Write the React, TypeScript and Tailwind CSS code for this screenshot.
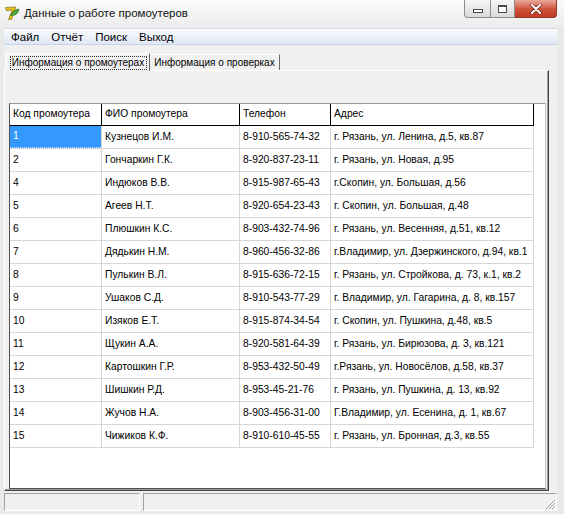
import React from "react";

const rows: string[][] = [
  ["1", "Кузнецов И.М.", "8-910-565-74-32", "г. Рязань, ул. Ленина, д.5, кв.87"],
  ["2", "Гончаркин Г.К.", "8-920-837-23-11", "г. Рязань, ул. Новая, д.95"],
  ["4", "Индюков В.В.", "8-915-987-65-43", "г.Скопин, ул. Большая, д.56"],
  ["5", "Агеев Н.Т.", "8-920-654-23-43", "г. Скопин, ул. Большая, д.48"],
  ["6", "Плюшкин К.С.", "8-903-432-74-96", "г. Рязань, ул. Весенняя, д.51, кв.12"],
  ["7", "Дядькин Н.М.", "8-960-456-32-86", "г.Владимир, ул. Дзержинского, д.94, кв.1"],
  ["8", "Пулькин В.Л.", "8-915-636-72-15", "г. Рязань, ул. Стройкова, д. 73, к.1, кв.2"],
  ["9", "Ушаков С.Д.", "8-910-543-77-29", "г. Владимир, ул. Гагарина, д. 8, кв.157"],
  ["10", "Изяков Е.Т.", "8-915-874-34-54", "г. Скопин, ул. Пушкина, д.48, кв.5"],
  ["11", "Щукин А.А.", "8-920-581-64-39", "г. Рязань, ул. Бирюзова, д. 3, кв.121"],
  ["12", "Картошкин Г.Р.", "8-953-432-50-49", "г.Рязань, ул. Новосёлов, д.58, кв.37"],
  ["13", "Шишкин Р.Д.", "8-953-45-21-76", "г. Рязань, ул. Пушкина, д. 13, кв.92"],
  ["14", "Жучов Н.А.", "8-903-456-31-00", "Г.Владимир, ул. Есенина, д. 1, кв.67"],
  ["15", "Чижиков К.Ф.", "8-910-610-45-55", "г. Рязань, ул. Бронная, д.3, кв.55"],
];

const headers = ["Код промоутера", "ФИО промоутера", "Телефон", "Адрес"];
const colW = ["w-[92px]", "w-[138px]", "w-[91px]", "w-[203px]"];

function AppIcon() {
  return (
    <svg width="16" height="16" viewBox="0 0 16 16">
      <path d="M1.5 2.5 L12 2 L7.5 14.5 L4.5 14.5 L8.3 5.2 L2.2 5.4 Z" fill="#e6c21e" stroke="#7a5a00" strokeWidth="0.6" />
      <path d="M6.5 10.5 C8 6.5 11.5 4.5 15 4 C14.5 8 11.5 11 6.5 10.5 Z" fill="#2f9a2a" stroke="#1d5e18" strokeWidth="0.5" />
      <path d="M8 10 L13 6" stroke="#a8e070" strokeWidth="0.7" />
    </svg>
  );
}

export default function App() {
  return (
    <div className="w-[564px] h-[514px] overflow-hidden flex flex-col bg-[#e9e9e9] text-black font-['Liberation_Sans',Arial,sans-serif] select-none">
      {/* Title bar */}
      <div className="h-[28px] flex items-start pl-[4px] pr-[7px] bg-gradient-to-b from-[#fbfbfb] to-[#ececec]">
        <div className="mt-[5px]">
          <AppIcon />
        </div>
        <div className="mt-[6px] ml-[4px] text-[11.5px] leading-[14px] text-[#111]">Данные о работе промоутеров</div>
        <div className="flex-1" />
        <div className="flex h-[18px]">
          <div className="w-[27px] h-full flex items-end justify-center pb-[4px] rounded-bl-[4px] border border-t-0 border-[#8c8c8c] bg-gradient-to-b from-[#f6f6f6] to-[#d9d9d9]">
            <div className="w-[10px] h-[4px] border border-[#4a4a4a] bg-white" />
          </div>
          <div className="w-[24px] h-full flex items-center justify-center border-b border-r border-[#8c8c8c] bg-gradient-to-b from-[#f6f6f6] to-[#d9d9d9]">
            <div className="w-[9px] h-[8px] border border-[#4a4a4a] border-t-2 bg-white" />
          </div>
          <div className="w-[42px] h-full flex items-center justify-center rounded-br-[4px] border border-t-0 border-l-0 border-[#8a3a2e] bg-gradient-to-b from-[#e9a99c] via-[#d0553f] to-[#c13a22]">
            <svg width="12" height="10" viewBox="0 0 12 10">
              <path d="M2 1 L10 9 M10 1 L2 9" stroke="#5a1a10" strokeWidth="3.2" strokeLinecap="round" />
              <path d="M2 1 L10 9 M10 1 L2 9" stroke="#ffffff" strokeWidth="2" strokeLinecap="round" />
            </svg>
          </div>
        </div>
      </div>

      {/* Client area */}
      <div className="flex-1 flex flex-col ml-[4px] mr-[7px] mb-[3px] bg-[#f0f0f0]">
        {/* Menu bar */}
        <div className="h-[17px] flex items-center pl-[1px] text-[11.5px] leading-[14px] bg-gradient-to-b from-[#fbfcfe] to-[#dfe7f4] border-t border-[#d3dcea] border-b border-b-[#c7d4e7]">
          <span className="px-[6px]">Файл</span>
          <span className="px-[6px]">Отчёт</span>
          <span className="px-[6px]">Поиск</span>
          <span className="px-[6px]">Выход</span>
        </div>

        {/* Tabs */}
        <div className="mt-[8px] h-[17px] flex items-end pl-[2px] text-[10px] leading-[12px] whitespace-nowrap">
          <div className="relative z-10 -mb-[1px] w-[144px] h-[18px] bg-[#f0f0f0] border-l border-t border-white border-r border-r-[#696969] flex items-center justify-center">
            <div className="h-[14px] w-[137px] flex items-center justify-center border border-dotted border-[#333]">
              Информация о промоутерах
            </div>
          </div>
          <div className="w-[130px] h-[16px] border-t border-white border-r border-r-[#696969] flex items-center justify-center">
            Информация о проверках
          </div>
        </div>

        {/* Tab page */}
        <div className="flex-1 flex flex-col mr-[8px] border-l border-t border-white border-r border-b border-r-[#404040] border-b-[#404040] shadow-[inset_-1px_-1px_0_#a0a0a0] pl-[4px] pt-[32px] pr-[2px] pb-[1px]">
          <div className="flex-1 flex flex-col bg-white border border-t-[#9a9a9a] border-l-[#505050] border-b-[#505050] border-r-[#c8c8c8] text-[10.3px] leading-[12px] whitespace-nowrap">
            {/* Header */}
            <div className="flex h-[22px] shrink-0">
              {headers.map((h, i) => (
                <div
                  key={h}
                  className={`${colW[i]} h-full flex items-center pl-[3px] pb-[2px] border-r border-b border-black`}
                >
                  {h}
                </div>
              ))}
            </div>
            {/* Rows */}
            {rows.map((r, ri) => (
              <div key={r[0]} className="flex h-[23px] shrink-0">
                {r.map((c, ci) => {
                  const selected = ri === 0 && ci === 0;
                  return (
                    <div
                      key={ci}
                      className={`${colW[ci]} h-full border-r border-b border-[#d6d6d6] ${
                        selected ? "bg-[#3399ff] text-white" : ""
                      }`}
                    >
                      <div
                        className={`h-full flex items-center pl-[3px] pb-[1px] ${
                          selected ? "border-b border-dotted border-[#cfe6ff]" : ""
                        }`}
                      >
                        {c}
                      </div>
                    </div>
                  );
                })}
              </div>
            ))}
          </div>
        </div>

        {/* Status bar */}
        <div className="mt-[2px] h-[18px] flex gap-[3px]">
          <div className="w-[136px] h-full border border-t-[#a0a0a0] border-l-[#a0a0a0] border-b-white border-r-white" />
          <div className="flex-1 h-full relative border border-t-[#a0a0a0] border-l-[#a0a0a0] border-b-white border-r-white">
            <svg className="absolute right-0 bottom-0" width="12" height="12" viewBox="0 0 12 12">
              <path d="M11 2 L2 11 M11 5 L5 11 M11 8 L8 11" stroke="#a0a0a0" strokeWidth="1" />
              <path d="M12 3 L3 12 M12 6 L6 12 M12 9 L9 12" stroke="#ffffff" strokeWidth="1" />
            </svg>
          </div>
        </div>
      </div>
    </div>
  );
}
